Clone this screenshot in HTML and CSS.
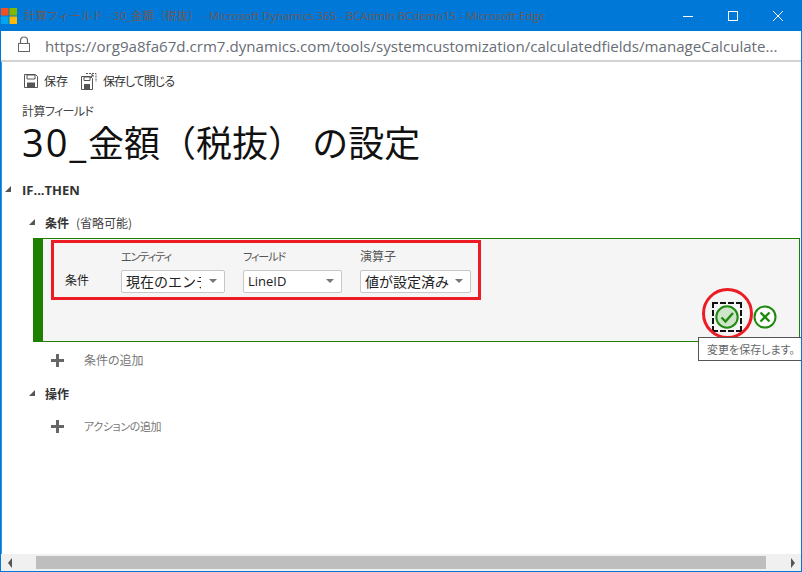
FILE: index.html
```html
<!DOCTYPE html>
<html lang="ja">
<head>
<meta charset="utf-8">
<title>計算フィールド</title>
<link rel="stylesheet" href="styles.css">
</head>
<body>
<div class="window">
  <header class="titlebar">
    <svg class="logo" width="16" height="16" viewBox="0 0 16 16"><rect width="7.500" height="7.500" fill="#f25022"/><rect x="8.500" width="7.500" height="7.500" fill="#7fba00"/><rect y="8.500" width="7.500" height="7.500" fill="#00a4ef"/><rect x="8.500" y="8.500" width="7.500" height="7.500" fill="#ffb900"/></svg>
    <div class="title-text">計算フィールド - 30_金額<span class="full">（税抜）</span> - Microsoft Dynamics 365 - BCAdmin BCdemo15 - Microsoft Edge</div>
    <div class="win-controls">
      <svg width="12" height="12" viewBox="0 0 12 12"><path d="M1 6.500h10" stroke="#fff" fill="none"/></svg>
      <svg width="12" height="12" viewBox="0 0 12 12"><rect x="1.500" y="1.500" width="9" height="9" stroke="#fff" fill="none"/></svg>
      <svg width="12" height="12" viewBox="0 0 12 12"><path d="M1 1l10 10M11 1L1 11" stroke="#fff" fill="none"/></svg>
    </div>
  </header>
  <div class="addressbar">
    <svg class="lock" width="14" height="17" viewBox="0 0 14 17"><path d="M3.500 7V4.500a3.500 3.500 0 0 1 7 0V7" fill="none" stroke="#666" stroke-width="1.200"/><rect x="1.500" y="7.500" width="11" height="8" fill="none" stroke="#666"/></svg>
    <div class="url">https://org9a8fa67d.crm7.dynamics.com/tools/systemcustomization/calculatedfields/manageCalculate...</div>
  </div>
  <main class="page">
    <div class="toolbar">
      <div class="tool">
        <svg width="14" height="14" viewBox="0 0 14 14"><path d="M.5.500h11l2 2v11H.500z" fill="none" stroke="#555"/><path d="M3 1v4h8V1z" fill="none" stroke="#555"/><path d="M3 13V8.500h8V13z" fill="#555"/></svg>
        <span>保存</span>
      </div>
      <div class="tool">
        <svg width="16" height="17" viewBox="0 0 16 17"><path d="M.5 3.500h9l2 2v11H.500z" fill="#fff" stroke="#555"/><path d="M3 4v3.500h6V4z" fill="none" stroke="#555"/><path d="M3 16v-5h6v5z" fill="#555"/><path d="M5 .500h10V9" fill="none" stroke="#555" stroke-dasharray="2 1"/><path d="M9 5l3-3M10 2h2v2" fill="none" stroke="#555"/></svg>
        <span class="tight">保存して閉じる</span>
      </div>
    </div>
    <div class="subtitle">計算フィールド</div>
    <h1 class="heading"><span class="num">30_</span>金額（税抜） の設定</h1>

    <div class="section-head top"><i class="tri"></i><b>IF...THEN</b></div>
    <div class="section-head sub"><i class="tri"></i><b>条件</b><span>(省略可能)</span></div>

    <div class="panel">
      <div class="cond-row">
        <div class="cond-label">条件</div>
        <div class="field f1"><label class="kana">エンティティ</label><div class="select"><span>現在のエンティティ</span><i></i></div></div>
        <div class="field f2"><label class="kana">フィールド</label><div class="select"><span class="latin">LineID</span><i></i></div></div>
        <div class="field f3"><label>演算子</label><div class="select"><span>値が設定済み</span><i></i></div></div>
      </div>
      <div class="panel-actions">
        <div class="focus-box">
          <svg width="24" height="24" viewBox="0 0 24 24"><circle cx="12" cy="12" r="10.700" fill="#cfe5c9" stroke="#1f8a0f" stroke-width="2"/><path d="M6.500 12.500l4 4 7.500-8.500" fill="none" stroke="#1f8a0f" stroke-width="2.400"/></svg>
        </div>
        <svg class="cancel" width="24" height="24" viewBox="0 0 24 24"><circle cx="12" cy="12" r="10.500" fill="#fff" stroke="#1f8a0f" stroke-width="2"/><path d="M7.500 7.500l9 9M16.500 7.500l-9 9" fill="none" stroke="#1f8a0f" stroke-width="2.400"/></svg>
      </div>
      <div class="mark-rect"></div>
      <div class="mark-circle"></div>
    </div>
    <div class="tooltip">変更を保存します。</div>

    <div class="add-row first"><svg width="13" height="13" viewBox="0 0 13 13"><path d="M5 0h3v5h5v3H8v5H5V8H0V5h5z" fill="#666"/></svg><span>条件の追加</span></div>
    <div class="section-head sub2"><i class="tri"></i><b>操作</b></div>
    <div class="add-row second"><svg width="13" height="13" viewBox="0 0 13 13"><path d="M5 0h3v5h5v3H8v5H5V8H0V5h5z" fill="#666"/></svg><span class="action">アクションの追加</span></div>
  </main>
  <div class="hscroll">
    <i class="arrow left"></i>
    <div class="thumb"></div>
    <i class="arrow right"></i>
  </div>
</div>
</body>
</html>
```
FILE: styles.css
```css
* { box-sizing: border-box; }
html, body { margin: 0; height: 100%; }
body { font-family: "Noto Sans CJK JP", "Open Sans", sans-serif; font-feature-settings: "palt"; background: #fff; overflow: hidden; }
.latin { font-family: "Open Sans", "Noto Sans CJK JP", sans-serif; }

.window { width: 802px; height: 572px; display: flex; flex-direction: column; border: 1px solid #0078d7; border-top: 0; position: relative; overflow: hidden; }

.titlebar { height: 31px; flex: none; background: #0078d7; display: flex; align-items: center; }
.logo { flex: none; }
.title-text { margin-left: 7px; flex: 1; font: 11.400px/16px "Open Sans", "Noto Sans CJK JP", sans-serif; color: #6f5a58; white-space: nowrap; overflow: hidden; }
.full { font-feature-settings: normal; }
.win-controls { display: flex; align-items: center; justify-content: flex-end; gap: 33px; padding-right: 17px; width: 135px; flex: none; }

.addressbar { height: 31px; flex: none; display: flex; align-items: center; border-bottom: 2px solid #d2d2d2; padding-left: 16px; gap: 14px; }
.lock { margin-top: -2px; }
.url { font: 15.100px/20px "Open Sans", "Noto Sans CJK JP", sans-serif; color: #686d75; white-space: nowrap; padding-top: 1px; }

.page { flex: 1; min-height: 0; position: relative; box-shadow: inset 1px 0 0 #2b96e8; }
.toolbar { display: flex; align-items: center; gap: 13px; padding: 8px 0 0 23px; height: 30px; }
.tool { display: flex; align-items: center; gap: 6px; font-size: 12px; line-height: 16px; color: #333; }
.tight { letter-spacing: -1px; }
.subtitle { margin: 11px 0 0 21px; font-size: 12px; line-height: 16px; color: #444; letter-spacing: -0.6px; }
.heading { margin: 0 0 0 21px; font-size: 36px; line-height: 44px; font-weight: 400; color: #111; white-space: nowrap; font-feature-settings: normal; }
.num { font-family: "Open Sans", sans-serif; font-size: 38px; letter-spacing: 2px; }

.section-head { display: flex; align-items: center; font-size: 12px; line-height: 16px; color: #333; }
.section-head b { font-weight: 700; }
.section-head span { margin-left: 7px; color: #444; }
.tri { width: 0; height: 0; border-style: solid; border-width: 0 0 6px 6px; border-color: transparent transparent #555 transparent; margin-top: -2px; }
.top { margin-top: 18px; padding-left: 4px; }
.top b { font: 700 13px/16px "Open Sans", sans-serif; }
.top .tri { margin-right: 11px; }
.sub { margin-top: 17px; padding-left: 28px; }
.sub .tri, .sub2 .tri { margin-right: 10px; }
.sub2 { margin-top: 18px; padding-left: 28px; }

.panel { position: relative; margin: 7px 1px 0 32px; height: 104px; background: #f5f5f5; border: 1px solid #1f8000; border-left: 10px solid #1f8000; }
.cond-row { display: flex; align-items: flex-end; height: 54px; }
.cond-label { width: 78px; padding-left: 22px; font-size: 12px; line-height: 16px; color: #222; padding-bottom: 5px; flex: none; }
.field { display: flex; flex-direction: column; flex: none; }
.field label { font-size: 12px; line-height: 14px; color: #555; margin-bottom: 7px; }
.field .kana { font-size: 11px; letter-spacing: -1px; }
.f1 { width: 104px; margin-right: 18px; }
.f2 { width: 99px; margin-right: 18px; }
.f3 { width: 111px; }
.select { height: 23px; background: #fff; border: 1px solid #c8c8c8; border-radius: 2px; display: flex; align-items: center; padding-left: 4px; position: relative; font-size: 14px; color: #222; white-space: nowrap; font-feature-settings: normal; }
.select span { flex: 1; min-width: 0; overflow: hidden; margin-right: 23px; line-height: 21px; }
.select .latin { font-size: 13px; }
.f3 .select span { margin-right: 20px; }
.select i { position: absolute; right: 7px; top: 8px; width: 0; height: 0; border-left: 4px solid transparent; border-right: 4px solid transparent; border-top: 4px solid #777; }

.panel-actions { position: absolute; right: 22px; top: 63px; display: flex; align-items: center; gap: 11px; }
.focus-box { width: 30px; height: 30px; border: 2px dashed #111; display: flex; align-items: center; justify-content: center; }
.cancel { display: block; }

.mark-rect { position: absolute; left: 8px; top: 1px; width: 430px; height: 60px; border: 3px solid #ed1c24; }
.mark-circle { position: absolute; left: 659px; top: 49px; width: 51px; height: 51px; border: 3px solid #ed1c24; border-radius: 50%; }

.tooltip { position: absolute; left: 697px; top: 275px; width: 104px; height: 24px; background: #fff; border: 1px solid #555; border-right: 0; font-size: 11px; line-height: 22px; color: #666; padding-left: 8px; white-space: nowrap; }

.add-row { display: flex; align-items: center; font-size: 12px; line-height: 16px; color: #777; padding-left: 50px; }
.add-row span { margin-left: 20px; }
.add-row .action { font-size: 11px; letter-spacing: -0.4px; }
.first { margin-top: 10px; }
.second { margin-top: 16px; }

.hscroll { height: 17px; flex: none; background: #f0f0f0; display: flex; align-items: center; justify-content: space-between; padding: 0 6px 0 7px; margin-top: auto; }
.thumb { flex: 1; height: 13px; background: #bebebe; margin: 0 25px 0 24px; }
.arrow { width: 0; height: 0; border-top: 5px solid transparent; border-bottom: 5px solid transparent; }
.left { border-right: 4px solid #555; }
.right { border-left: 4px solid #555; }
```
